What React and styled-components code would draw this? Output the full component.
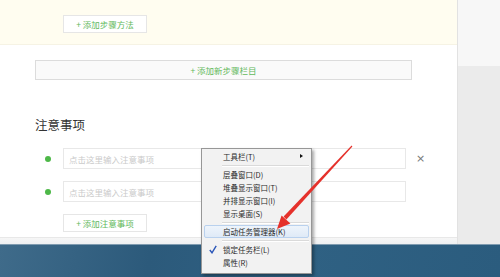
import React from "react";
import styled, { createGlobalStyle } from "styled-components";

const GlobalStyle = createGlobalStyle`
  html, body { margin: 0; padding: 0; overflow: hidden; }
  body { font-family: "Noto Sans CJK SC", "Liberation Sans", sans-serif; }
`;

const Screen = styled.div`
  position: relative;
  width: 500px;
  height: 277px;
  display: flex;
  flex-direction: column;
  overflow: hidden;
  background: #fff;
`;

const Desktop = styled.div`
  display: flex;
  height: 244px;
`;

const Main = styled.div`
  width: 458px;
  display: flex;
  flex-direction: column;
  background: #fff;
`;

const StepsSection = styled.div`
  height: 45px;
  background: #fffdf0;
  border-bottom: 1px solid #f6f3e4;
  padding: 15px 0 0 63px;
  box-sizing: border-box;
`;

const Page = styled.div`
  height: 193px;
  display: flex;
  flex-direction: column;
  padding-left: 35px;
  border-bottom: 1px solid #e8e8e8;
  box-sizing: border-box;
`;

const Gutter = styled.div`
  flex: 1;
  background: linear-gradient(#f6f6f6, #eef0f2);
`;

const AddButton = styled.div`
  width: 84px;
  height: 18px;
  box-sizing: border-box;
  border: 1px solid #e6e6e6;
  background: #fff;
  color: #62b95c;
  font-size: 8.5px;
  display: flex;
  align-items: center;
  justify-content: center;
  margin-left: ${(p) => p.$indent || 0}px;
  margin-top: ${(p) => p.$top || 0}px;
`;

const WideButton = styled.div`
  margin-top: 15px;
  width: 377px;
  height: 20px;
  box-sizing: border-box;
  border: 1px solid #dcdcdc;
  background: #fafafa;
  color: #62b95c;
  font-size: 8.5px;
  display: flex;
  align-items: center;
  justify-content: center;
`;

const Heading = styled.div`
  margin-top: 35px;
  height: 20px;
  line-height: 20px;
  font-size: 12.5px;
  color: #333;
`;

const NoteRow = styled.div`
  display: flex;
  align-items: center;
  height: 21px;
  margin-top: ${(p) => p.$top}px;
`;

const Dot = styled.span`
  width: 6px;
  height: 6px;
  border-radius: 50%;
  background: #4db848;
  margin-left: 10px;
  margin-right: 12px;
`;

const NoteInput = styled.div`
  width: 343px;
  height: 21px;
  box-sizing: border-box;
  border: 1px solid #e8e8e8;
  background: #fff;
  color: #cacaca;
  font-size: 8.5px;
  display: flex;
  align-items: center;
  padding-left: 5px;
`;

const Remove = styled.span`
  margin-left: 10px;
  font-size: 11px;
  color: #777;
  font-family: "DejaVu Sans", sans-serif;
`;

const Side = styled.div`
  width: 42px;
  display: flex;
  flex-direction: column;
  border-left: 1px solid #e2e2e2;
`;

const SideTop = styled.div`
  height: 66px;
  background: #f7f7f7;
`;

const SideBottom = styled.div`
  flex: 1;
  background: #ebebeb;
`;

const Taskbar = styled.div`
  flex: 1;
  border-top: 1px solid #7f9bb0;
  background: linear-gradient(100deg, #3f6b8a 0%, #2c5a7b 30%, #2f6183 60%, #2b5c7e 100%);
`;

const Menu = styled.div`
  position: absolute;
  left: 201px;
  top: 148px;
  width: 111px;
  box-sizing: border-box;
  padding: 1px 2px 4px;
  background: #f2f2f2;
  border: 1px solid #979797;
  box-shadow: 2px 2px 3px rgba(0, 0, 0, 0.35);
  font-size: 7.5px;
  color: #2a2a2a;
`;

const MenuItem = styled.div`
  position: relative;
  height: 13px;
  line-height: 13px;
  padding-left: 19px;
  box-sizing: border-box;
  border-radius: 2px;
  white-space: nowrap;
  ${(p) =>
    p.$active &&
    `
    background: linear-gradient(#eef4fb, #dfeaf7);
    border: 1px solid #b9d1ee;
    line-height: 11px;
    padding-left: 18px;
  `}
`;

const Separator = styled.div`
  height: 5px;
  display: flex;
  align-items: center;
  padding-left: 18px;
  &::after {
    content: "";
    flex: 1;
    height: 1px;
    background: #dadada;
    border-bottom: 1px solid #fff;
  }
`;

const SubArrow = styled.span`
  position: absolute;
  right: 6px;
  top: 4px;
  width: 0;
  height: 0;
  border-top: 2.5px solid transparent;
  border-bottom: 2.5px solid transparent;
  border-left: 3px solid #111;
`;

const Check = styled.svg`
  position: absolute;
  left: 5px;
  top: 2px;
`;

const ArrowLayer = styled.svg`
  position: absolute;
  left: 0;
  top: 0;
  pointer-events: none;
`;

export default function App() {
  return (
    <>
      <GlobalStyle />
      <Screen>
        <Desktop>
          <Main>
            <StepsSection>
              <AddButton>+ 添加步骤方法</AddButton>
            </StepsSection>
            <Page>
              <WideButton>+ 添加新步骤栏目</WideButton>
              <Heading>注意事项</Heading>
              <NoteRow $top={13}>
                <Dot />
                <NoteInput>点击这里输入注意事项</NoteInput>
                <Remove>×</Remove>
              </NoteRow>
              <NoteRow $top={12}>
                <Dot />
                <NoteInput>点击这里输入注意事项</NoteInput>
              </NoteRow>
              <AddButton $indent={28} $top={12}>+ 添加注意事项</AddButton>
            </Page>
            <Gutter />
          </Main>
          <Side>
            <SideTop />
            <SideBottom />
          </Side>
        </Desktop>
        <Taskbar />

        <Menu>
          <MenuItem>
            工具栏(T)
            <SubArrow />
          </MenuItem>
          <Separator />
          <MenuItem>层叠窗口(D)</MenuItem>
          <MenuItem>堆叠显示窗口(T)</MenuItem>
          <MenuItem>并排显示窗口(I)</MenuItem>
          <MenuItem>显示桌面(S)</MenuItem>
          <Separator />
          <MenuItem $active>启动任务管理器(K)</MenuItem>
          <Separator />
          <MenuItem>
            <Check width="8" height="9" viewBox="0 0 8 9">
              <path d="M0.8 5 L3 7.8 L7.2 0.8" fill="none" stroke="#2b56b8" strokeWidth="1.4" />
            </Check>
            锁定任务栏(L)
          </MenuItem>
          <MenuItem>属性(R)</MenuItem>
        </Menu>

        <ArrowLayer width="500" height="277" viewBox="0 0 500 277">
          <polygon points="352.4,146.6 351.6,145.4 283.6,216.6 286.4,219.4" fill="#e5312b" />
          <polygon points="277,229 281.6,215.6 290.4,223.4" fill="#e5312b" />
        </ArrowLayer>
      </Screen>
    </>
  );
}
